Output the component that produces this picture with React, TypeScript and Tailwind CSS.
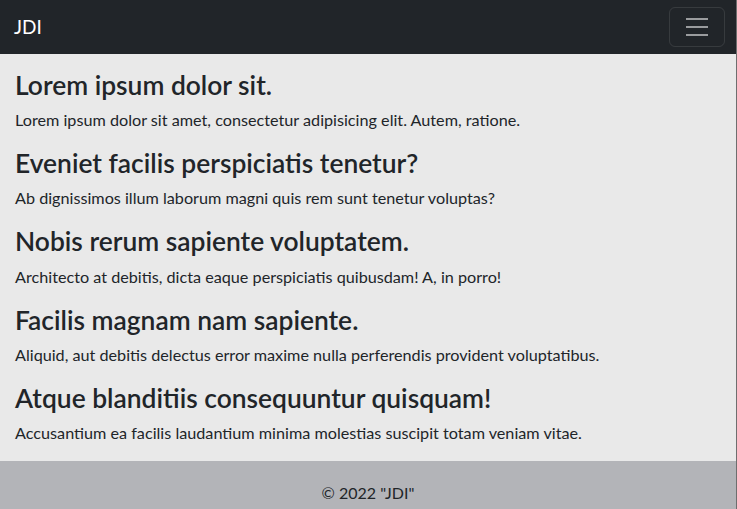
import React from "react";

const sections = [
  ["Lorem ipsum dolor sit.", "Lorem ipsum dolor sit amet, consectetur adipisicing elit. Autem, ratione."],
  ["Eveniet facilis perspiciatis tenetur?", "Ab dignissimos illum laborum magni quis rem sunt tenetur voluptas?"],
  ["Nobis rerum sapiente voluptatem.", "Architecto at debitis, dicta eaque perspiciatis quibusdam! A, in porro!"],
  ["Facilis magnam nam sapiente.", "Aliquid, aut debitis delectus error maxime nulla perferendis provident voluptatibus."],
  ["Atque blanditiis consequuntur quisquam!", "Accusantium ea facilis laudantium minima molestias suscipit totam veniam vitae."],
];

export default function App() {
  return (
    <div
      className="min-h-[509px] flex flex-col text-[#212529] border-r border-[#6e6e6e]"
      style={{ fontFamily: '"Lato", "Noto Sans", sans-serif' }}
    >
      <nav className="h-[54px] bg-[#212529] flex items-center justify-between pl-[14px] pr-[11px]">
        <span className="text-white text-[19px] leading-[30px]">JDI</span>
        <button className="w-[56px] h-[40px] border border-white/10 rounded-[6px] flex items-center justify-center">
          <svg width="30" height="30" viewBox="0 0 30 30">
            <path d="M4 7h22M4 15h22M4 23h22" stroke="rgba(255,255,255,0.55)" strokeWidth="2" strokeLinecap="butt" />
          </svg>
        </button>
      </nav>
      <main className="bg-[#e9e9e9] px-[15px] pt-[16px] flex-1">
        {sections.map(([h, p]) => (
          <div key={h}>
            <h3 className="text-[26.4px] leading-[30.24px] font-semibold mb-2">{h}</h3>
            <p className="text-[16.2px] leading-[24px] mb-4">{p}</p>
          </div>
        ))}
      </main>
      <footer className="bg-[#b3b4b8] h-[48px] pt-[20px] text-center text-[16px] leading-[24px]">
        © 2022 "JDI"
      </footer>
    </div>
  );
}
